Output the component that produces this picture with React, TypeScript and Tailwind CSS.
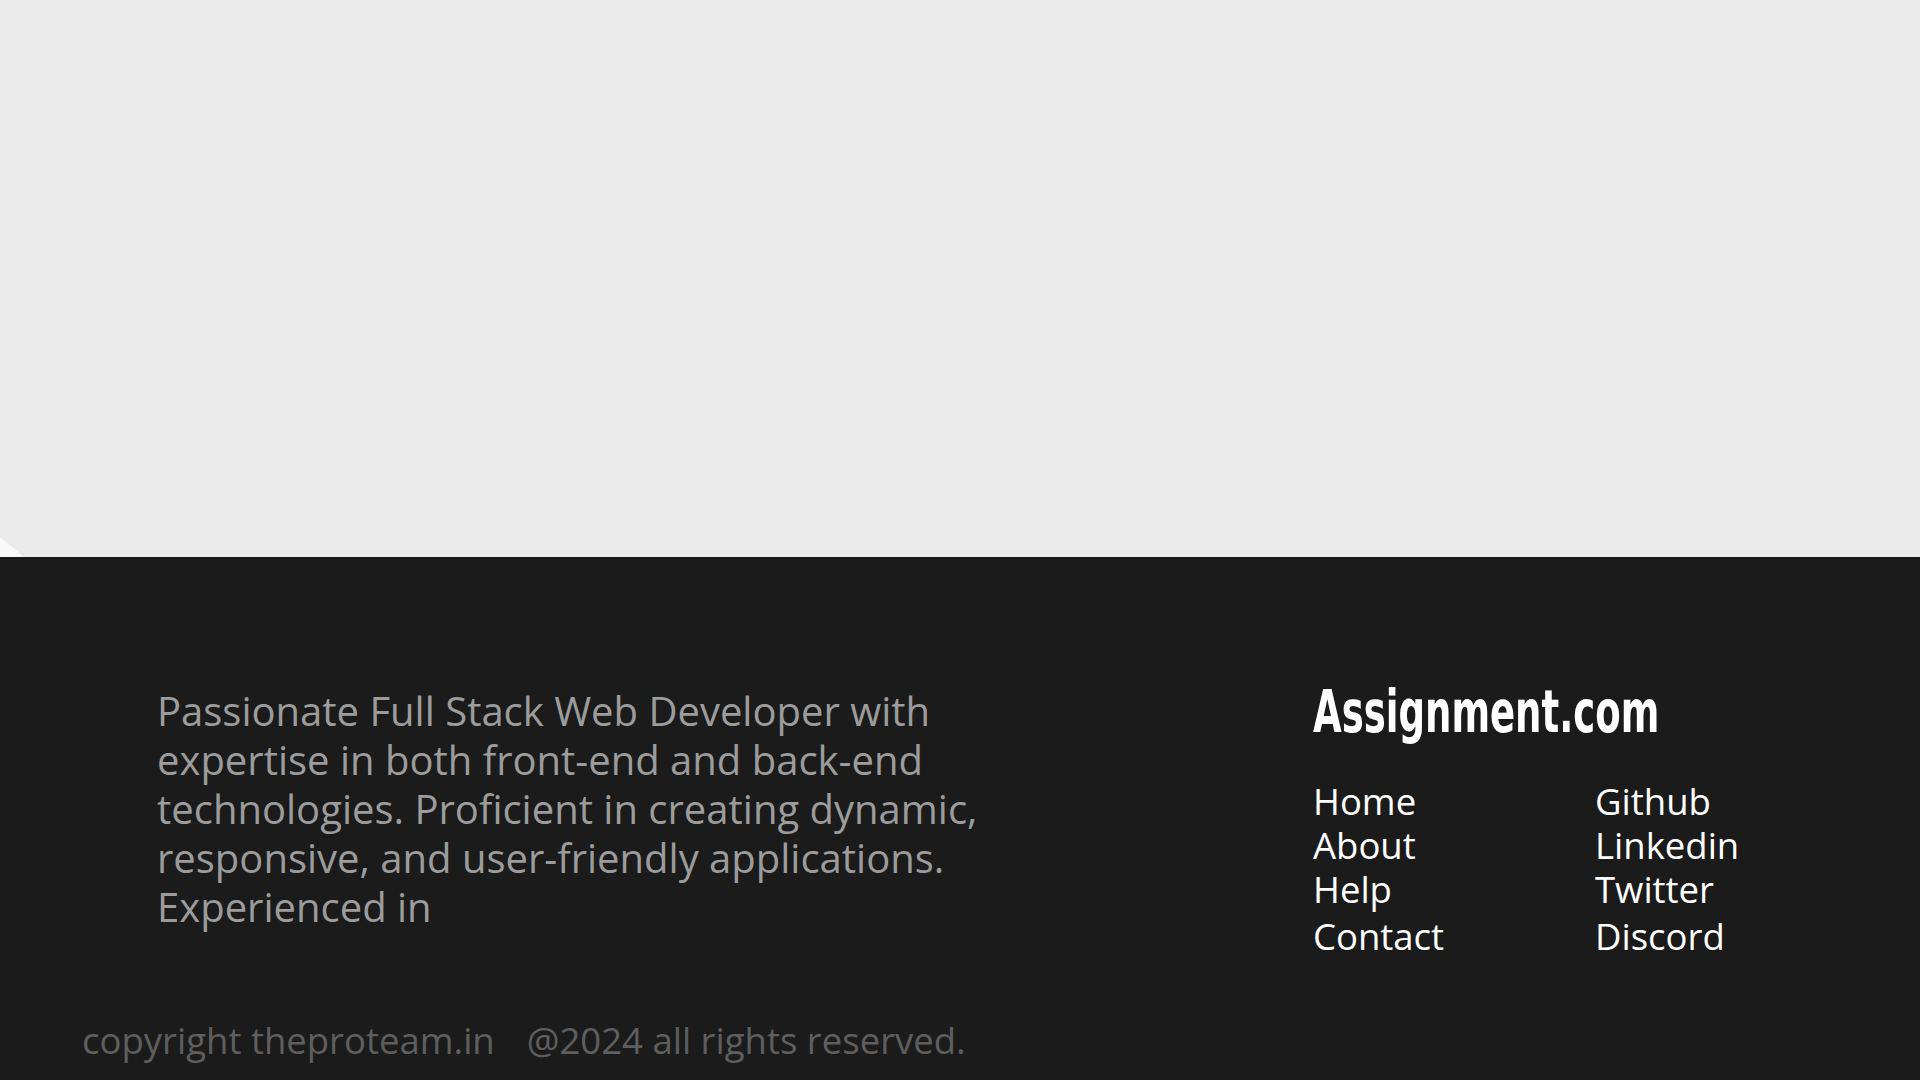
const leftLinks = ["Home", "About", "Help", "Contact"];
const rightLinks = ["Github", "Linkedin", "Twitter", "Discord"];

const App = () => {
  return (
    <div className="min-h-screen bg-[#1b1b1b] font-['Open_Sans',sans-serif]">
      {/* Top section */}
      <section className="relative h-[557px] bg-[#ebebeb]">
        <svg
          className="absolute bottom-0 left-0"
          width="26"
          height="22"
          viewBox="0 0 26 22"
        >
          <polygon points="0,2 24,22 0,22" fill="#f9f9f9" />
        </svg>
      </section>

      {/* Footer */}
      <footer className="bg-[#1b1b1b] pt-[126px] pb-[15px]">
        <div className="flex items-start">
          <p className="ml-[157px] mt-[3px] w-[850px] text-[40px] leading-[49px] text-[#9c9c9c]">
            Passionate Full Stack Web Developer with expertise in both front-end
            and back-end technologies. Proficient in creating dynamic,
            responsive, and user-friendly applications. Experienced in
          </p>

          <div className="ml-[306px]">
            <h2 className="origin-left scale-x-[0.71] whitespace-nowrap font-['DejaVu_Sans_Condensed',sans-serif] text-[58px] font-bold leading-[58px] text-white">
              Assignment.com
            </h2>
            <div className="mt-[38px] flex">
              <ul className="w-[282px] text-[36.5px] leading-[44px] text-white">
                {leftLinks.map((l, i) => (
                  <li key={l} className={i === 3 ? "pt-[3px]" : ""}>
                    <a href="#">{l}</a>
                  </li>
                ))}
              </ul>
              <ul className="text-[36.5px] leading-[44px] text-white">
                {rightLinks.map((l, i) => (
                  <li key={l} className={i === 3 ? "pt-[3px]" : ""}>
                    <a href="#">{l}</a>
                  </li>
                ))}
              </ul>
            </div>
          </div>
        </div>

        <div className="mt-[58px] flex gap-[32px] pl-[82px] text-[36.5px] leading-[49px] text-[#5e5e5e]">
          <span>copyright theproteam.in</span>
          <span>@2024 all rights reserved.</span>
        </div>
      </footer>
    </div>
  );
};

export default App;
